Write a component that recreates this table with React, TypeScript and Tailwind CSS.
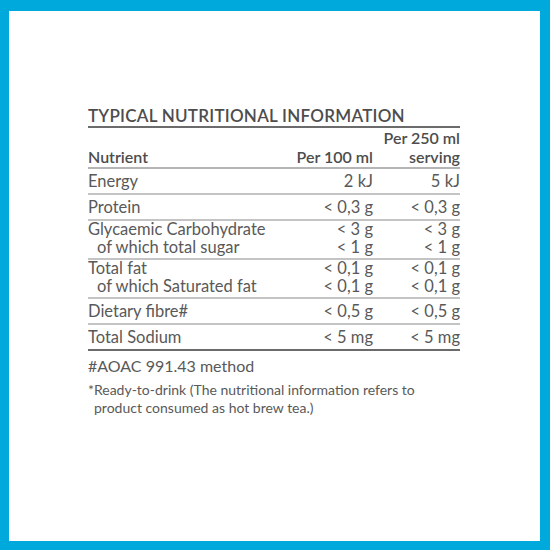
import React from "react";

const font = { fontFamily: "Lato, 'Open Sans', sans-serif" };

const rows = [
  { name: ["Energy"], a: ["2 kJ"], b: ["5 kJ"] },
  { name: ["Protein"], a: ["< 0,3 g"], b: ["< 0,3 g"] },
  {
    name: ["Glycaemic Carbohydrate", "of which total sugar"],
    a: ["< 3 g", "< 1 g"],
    b: ["< 3 g", "< 1 g"],
  },
  {
    name: ["Total fat", "of which Saturated fat"],
    a: ["< 0,1 g", "< 0,1 g"],
    b: ["< 0,1 g", "< 0,1 g"],
  },
  { name: ["Dietary fibre#"], a: ["< 0,5 g"], b: ["< 0,5 g"] },
  { name: ["Total Sodium"], a: ["< 5 mg"], b: ["< 5 mg"] },
];

const App = () => {
  return (
    <div
      className="w-[550px] h-[550px] bg-[#00a9dc] pl-[9px] pt-[11px] pr-[10px] pb-[9px]"
      style={font}
    >
      <div className="w-full h-full bg-white pt-[95px] pl-[79px] pr-[80px] text-[#595959]">
        <div className="w-[372px]">
          <h1 className="text-[17px] leading-[20px] font-semibold text-[#4d4d4d] tracking-[0.25px] border-b-2 border-[#6b6b6b]">
            TYPICAL NUTRITIONAL INFORMATION
          </h1>
          <div className="flex items-end text-[16px] leading-[19px] font-semibold text-[#4d4d4d] pb-[1px] border-b-2 border-[#b5b5b5]">
            <div className="flex-1">Nutrient</div>
            <div className="w-[110px] text-right">Per 100 ml</div>
            <div className="w-[87px] text-right">
              Per 250 ml
              <br />
              serving
            </div>
          </div>
          {rows.map((r, i) => {
            const double = r.name.length > 1;
            return (
              <div
                key={i}
                className={`flex text-[16.5px] border-b-2 ${
                  double ? "leading-[17.5px] pb-[2px]" : "leading-[18px] py-[3px]"
                } ${i === rows.length - 1 ? "border-[#6b6b6b]" : "border-[#c4c4c4]"}`}
              >
                <div className="flex-1 min-w-0 whitespace-nowrap">
                  {r.name.map((n, j) => (
                    <div key={j} className={j > 0 ? "pl-[9px]" : ""}>
                      {n}
                    </div>
                  ))}
                </div>
                <div className="w-[110px] text-right whitespace-nowrap">
                  {r.a.map((n, j) => (
                    <div key={j}>{n}</div>
                  ))}
                </div>
                <div className="w-[87px] text-right whitespace-nowrap">
                  {r.b.map((n, j) => (
                    <div key={j}>{n}</div>
                  ))}
                </div>
              </div>
            );
          })}
          <p className="text-[16px] leading-[20px] pt-[5px]">#AOAC 991.43 method</p>
          <p className="text-[14px] leading-[18px] pt-[5px]">
            *Ready-to-drink (The nutritional information refers to
            <br />
            <span className="pl-[6px]">product consumed as hot brew tea.)</span>
          </p>
        </div>
      </div>
    </div>
  );
};

export default App;
